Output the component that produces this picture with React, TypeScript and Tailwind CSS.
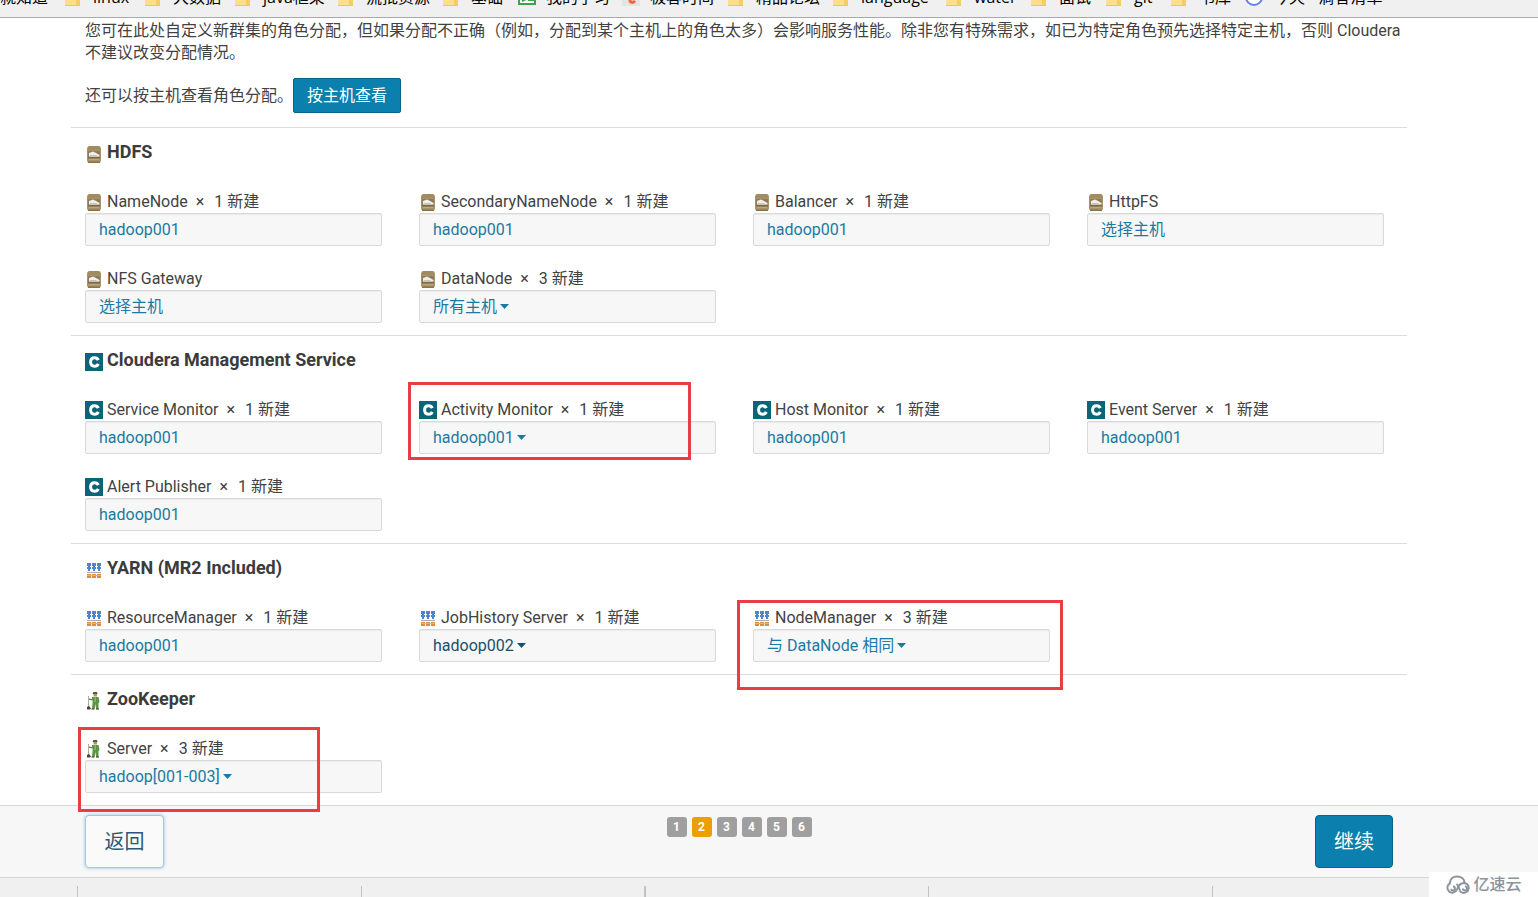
import type { ReactNode } from 'react';
import clsx from 'clsx';

type Service = 'hdfs' | 'cms' | 'yarn' | 'zookeeper';

interface Role {
  name: string;
  count?: number;
  hosts: string;
  dropdown?: boolean;
  active?: boolean;
  highlight?: string;
}

interface Group {
  title: string;
  service: Service;
  roles: Role[];
}

const GROUPS: Group[] = [
  {
    title: 'HDFS',
    service: 'hdfs',
    roles: [
      { name: 'NameNode', count: 1, hosts: 'hadoop001' },
      { name: 'SecondaryNameNode', count: 1, hosts: 'hadoop001' },
      { name: 'Balancer', count: 1, hosts: 'hadoop001' },
      { name: 'HttpFS', hosts: '选择主机' },
      { name: 'NFS Gateway', hosts: '选择主机' },
      { name: 'DataNode', count: 3, hosts: '所有主机', dropdown: true },
    ],
  },
  {
    title: 'Cloudera Management Service',
    service: 'cms',
    roles: [
      { name: 'Service Monitor', count: 1, hosts: 'hadoop001' },
      {
        name: 'Activity Monitor',
        count: 1,
        hosts: 'hadoop001',
        dropdown: true,
        highlight: '-left-[11px] -top-4 w-[283px] h-[78px]',
      },
      { name: 'Host Monitor', count: 1, hosts: 'hadoop001' },
      { name: 'Event Server', count: 1, hosts: 'hadoop001' },
      { name: 'Alert Publisher', count: 1, hosts: 'hadoop001' },
    ],
  },
  {
    title: 'YARN (MR2 Included)',
    service: 'yarn',
    roles: [
      { name: 'ResourceManager', count: 1, hosts: 'hadoop001' },
      { name: 'JobHistory Server', count: 1, hosts: 'hadoop002', dropdown: true, active: true },
      {
        name: 'NodeManager',
        count: 3,
        hosts: '与 DataNode 相同',
        dropdown: true,
        highlight: '-left-4 -top-1.5 w-[326px] h-[90px]',
      },
    ],
  },
  {
    title: 'ZooKeeper',
    service: 'zookeeper',
    roles: [
      {
        name: 'Server',
        count: 3,
        hosts: 'hadoop[001-003]',
        dropdown: true,
        highlight: '-left-[7px] -top-2.5 w-[242px] h-[85px]',
      },
    ],
  },
];

const BOOKMARKS = [
  { label: '就知道', width: 'w-[65px]', icon: 'none' },
  { label: 'linux', width: 'w-[80px]', icon: 'folder' },
  { label: '大数据', width: 'w-[90px]', icon: 'folder' },
  { label: 'java框架', width: 'w-[103px]', icon: 'folder' },
  { label: '流批资源', width: 'w-[105px]', icon: 'folder' },
  { label: '基础', width: 'w-[75px]', icon: 'folder' },
  { label: '我的学习', width: 'w-[104px]', icon: 'sheet' },
  { label: '极客时间', width: 'w-[106px]', icon: 'orange' },
  { label: '精品论坛', width: 'w-[105px]', icon: 'folder' },
  { label: 'language', width: 'w-[113px]', icon: 'folder' },
  { label: 'water', width: 'w-[85px]', icon: 'folder' },
  { label: '面试', width: 'w-[75px]', icon: 'folder' },
  { label: 'git', width: 'w-[65px]', icon: 'folder' },
  { label: '书库', width: 'w-[74px]', icon: 'folder' },
  { label: '今天 - 滴答清单', width: 'w-[150px]', icon: 'ring' },
];

const STEPS = [1, 2, 3, 4, 5, 6];
const CURRENT_STEP = 2;

function BookmarkIcon({ kind }: { kind: string }) {
  if (kind === 'none') return null;
  return (
    <svg className="w-[18px] h-[18px] shrink-0" viewBox="0 0 18 18" aria-hidden="true">
      {kind === 'folder' && (
        <>
          <path d="M0 2h7l2 2h6v14H0z" fill="#fbe08a" />
          <path d="M11 8h4v10h-4z" fill="#f3cf62" />
          <path d="M0 17h15v1H0z" fill="#e9c863" />
        </>
      )}
      {kind === 'sheet' && (
        <>
          <path d="M1 2h16v14H1z" fill="#fff" stroke="#3fa34d" strokeWidth="2" />
          <path d="M4 13l6-3V3M10 12h6" fill="none" stroke="#3fa34d" strokeWidth="2" />
        </>
      )}
      {kind === 'orange' && (
        <>
          <path d="M0 0h18v18H0z" fill="#e4e4e4" />
          <path d="M8 8v4c0 3 3 3 5 1" fill="none" stroke="#ee6a35" strokeWidth="3" />
        </>
      )}
      {kind === 'ring' && <circle cx="9" cy="9" r="8" fill="#fff" stroke="#6b80ee" strokeWidth="2" />}
    </svg>
  );
}

function BookmarkBar() {
  return (
    <nav className="h-[18px] overflow-hidden border-b border-[#a9a9a9] bg-[#f0f0f0]" aria-label="书签">
      <ul className="-mt-[15px] flex h-6 items-center font-['Open_Sans','Noto_Sans_CJK_SC',sans-serif] text-base text-black">
        {BOOKMARKS.map((item) => (
          <li key={item.label} className={clsx('shrink-0', item.width)}>
            <a href="#" className="flex items-center gap-2.5 whitespace-nowrap leading-6">
              <BookmarkIcon kind={item.icon} />
              {item.label}
            </a>
          </li>
        ))}
      </ul>
    </nav>
  );
}

function ServiceIcon({ service }: { service: Service }) {
  return (
    <svg className="w-[18px] h-[18px] shrink-0" viewBox="0 0 18 18" aria-hidden="true">
      {service === 'hdfs' && (
        <>
          <rect x="2" y="1" width="14" height="17" rx="3" fill="#a8946a" />
          <path d="M4 1h10l1.500 4h-13z" fill="#a28c5f" />
          <path d="M3 6h12v6H3z" fill="#8f7b57" />
          <path d="M4 8l4-1.500 3 1.500 3.500 2v1.500H4z" fill="#f1efec" />
          <path d="M5 10h6l3 2H4z" fill="#c9c4bb" />
          <path d="M3 12h12v1.500H3z" fill="#7d6946" />
          <path d="M4 14h10v1H4z" fill="#bba87f" />
          <path d="M3 16.500h12V18H3z" fill="#8a7347" />
        </>
      )}
      {service === 'cms' && (
        <>
          <path d="M0 0h18v18H0z" fill="#0b6578" />
          <path
            d="M13.300 7.200C12.600 5.600 11.400 4.800 9.600 4.800 7.100 4.800 5.600 6.500 5.600 9s1.500 4.200 4 4.200c1.800 0 3-.8 3.700-2.400"
            fill="none"
            stroke="#fff"
            strokeWidth="3"
          />
        </>
      )}
      {service === 'yarn' && (
        <>
          <path d="M2 2h4v3H2zM7 2h4v3H7zM12 2h4v3h-4zM2 6h4v2H2zM7 6h4v2H7zM12 6h4v2h-4z" fill="#4f83cc" />
          <path d="M3 5h2v5H3zM8 5h2v5H8zM13 5h2v5h-2z" fill="#4f83cc" />
          <path d="M2 11h14v1H2z" fill="#a8a8a8" />
          <path d="M2 13h4v4H2zM7 13h4v4H7zM12 13h4v4h-4z" fill="#e08a3c" />
          <path d="M2 14.500h14" stroke="#eab07c" />
        </>
      )}
      {service === 'zookeeper' && (
        <>
          <path d="M3.500 4v11" stroke="#b3aba0" />
          <path d="M2 15l2-1 2 2.500-1 1H2z" fill="#4b4035" />
          <path d="M8.500 0h3.500l.5 2h-5z" fill="#4d5e3c" />
          <path d="M8.500 2h3.500v2.500H8.500z" fill="#b78f70" />
          <path d="M7 5h6.500l1 5-1 1V17H11v-5l-1.500 5H7l.7-8.500L4 8V6.500l3 .5z" fill="#5f9447" />
          <path d="M9.500 5h1.500v5H9.500z" fill="#86b36a" />
          <path d="M6.500 16.500H9.500v1H6.500zM11 16.500h3v1h-3z" fill="#3e3a30" />
        </>
      )}
    </svg>
  );
}

function Caret() {
  return (
    <svg className="w-[9px] h-[5px]" viewBox="0 0 9 5" fill="currentColor" aria-hidden="true">
      <path d="M0 0h9L4.500 5z" />
    </svg>
  );
}

function RoleField({ role, service }: { role: Role; service: Service }) {
  return (
    <div className="relative ml-3.5 mr-[23px]">
      <div className="flex h-[23px] items-center gap-1">
        <ServiceIcon service={service} />
        <span>{role.name}</span>
        {role.count && (
          <>
            <span className="mx-1">×</span>
            <span className="ml-0.5">{role.count} 新建</span>
          </>
        )}
      </div>
      <div className="flex h-[33px] items-center rounded-xs border border-[#d9d9d9] bg-[#f7f7f7] px-[13px] shadow-[inset_0_1px_1px_rgba(0,0,0,0.05)]">
        <button
          type="button"
          className={clsx(
            'flex items-center gap-[3px] whitespace-nowrap',
            role.active ? 'text-[#15506e]' : 'text-[#1a7aa3]',
          )}
        >
          {role.hosts}
          {role.dropdown && <Caret />}
        </button>
      </div>
      {role.highlight && (
        <div className={clsx('pointer-events-none absolute z-10 border-3 border-[#e83e43]', role.highlight)} />
      )}
    </div>
  );
}

function RoleGroup({ group }: { group: Group }) {
  return (
    <section className="border-t border-[#dcdcdc] py-3">
      <h3 className="ml-3.5 flex h-6 items-center gap-1 text-lg leading-6 font-bold text-[#3b3b3b]">
        <span className="pt-1">
          <ServiceIcon service={group.service} />
        </span>
        {group.title}
      </h3>
      <div className="mt-[26px] grid grid-cols-4 gap-y-[21px]">
        {group.roles.map((role) => (
          <RoleField key={role.name} role={role} service={group.service} />
        ))}
      </div>
    </section>
  );
}

function Container({ children, className }: { children: ReactNode; className?: string }) {
  return <div className={clsx('ml-[71px] mr-[131px]', className)}>{children}</div>;
}

function WizardFooter() {
  return (
    <footer className="border-y border-[#d5d8d9] bg-[#f7f7f7]">
      <Container className="grid h-[71px] grid-cols-3 items-start px-3.5 pt-[9px]">
        <div>
          <button
            type="button"
            className="h-[53px] w-[79px] rounded-sm border border-[#a9c6d6] bg-[#fafafa] text-xl text-[#2b5876] shadow-[0_0_3px_1px_#bcd7e6]"
          >
            返回
          </button>
        </div>
        <ol className="mt-0.5 flex justify-center gap-[5px]">
          {STEPS.map((step) => (
            <li
              key={step}
              className={clsx(
                'h-5 w-5 rounded-[3px] text-center text-xs leading-5 font-bold text-white',
                step === CURRENT_STEP ? 'bg-[#eb9e05]' : 'bg-[#9f9f9f]',
              )}
            >
              {step}
            </li>
          ))}
        </ol>
        <div className="text-right">
          <button
            type="button"
            className="h-[53px] w-[78px] rounded-sm border border-[#096488] bg-[#0b7fad] text-xl text-white"
          >
            继续
          </button>
        </div>
      </Container>
    </footer>
  );
}

function Watermark() {
  return (
    <div className="absolute right-0 bottom-0 flex h-[25px] w-[109px] items-center justify-center gap-0.5 bg-white text-base leading-6 font-medium text-[#8d939e]">
      <svg className="w-[26px] h-5" viewBox="0 0 26 20" fill="none" stroke="currentColor" strokeWidth="2" aria-hidden="true">
        <path d="M5 8C5 4 8 1.500 12 1.500c4.500 0 7.500 2.800 7.500 6.500" />
        <path d="M8 11.500a2 2 0 1 1-2 2.500" />
        <path d="M5.500 8a5 5 0 1 0 6.500 6.500c1-3.500 3.500-6.500 7.500-6.500a5 5 0 1 1-5 7.500" />
        <path d="M11.500 9c1.500 1 2.500 4 3.500 6.500M18 13.500a2 2 0 1 0 2-2" />
      </svg>
      亿速云
    </div>
  );
}

export default function App() {
  return (
    <div className="relative flex min-h-screen flex-col overflow-hidden bg-white font-[Roboto,'Noto_Sans_CJK_SC',sans-serif] text-base leading-[22px] text-[#424242]">
      <BookmarkBar />
      <main>
        <Container>
          <div className="pt-0.5 pb-3.5 pl-3.5">
            <p>
              您可在此处自定义新群集的角色分配，但如果分配不正确（例如，分配到某个主机上的角色太多）会影响服务性能。除非您有特殊需求，如已为特定角色预先选择特定主机，否则
              Cloudera 不建议改变分配情况。
            </p>
            <div className="mt-3.5 flex items-center">
              <span>还可以按主机查看角色分配。</span>
              <button
                type="button"
                className="h-[35px] rounded-xs border border-[#096488] bg-[#0b7fad] px-[13px] text-white"
              >
                按主机查看
              </button>
            </div>
          </div>
          {GROUPS.map((group) => (
            <RoleGroup key={group.title} group={group} />
          ))}
        </Container>
      </main>
      <WizardFooter />

      {/* Download shelf */}
      <div className="grid min-h-[19px] grow grid-cols-[78px_284px_284px_283px_284px_1fr] bg-[#f0f0f0] pt-2">
        <div className="border-r border-[#c2c2c2]" />
        <div className="border-r border-[#c2c2c2]" />
        <div className="border-r-2 border-[#c2c2c2]" />
        <div className="border-r border-[#c2c2c2]" />
        <div className="border-r border-[#c2c2c2]" />
        <div />
      </div>
      <Watermark />
    </div>
  );
}
